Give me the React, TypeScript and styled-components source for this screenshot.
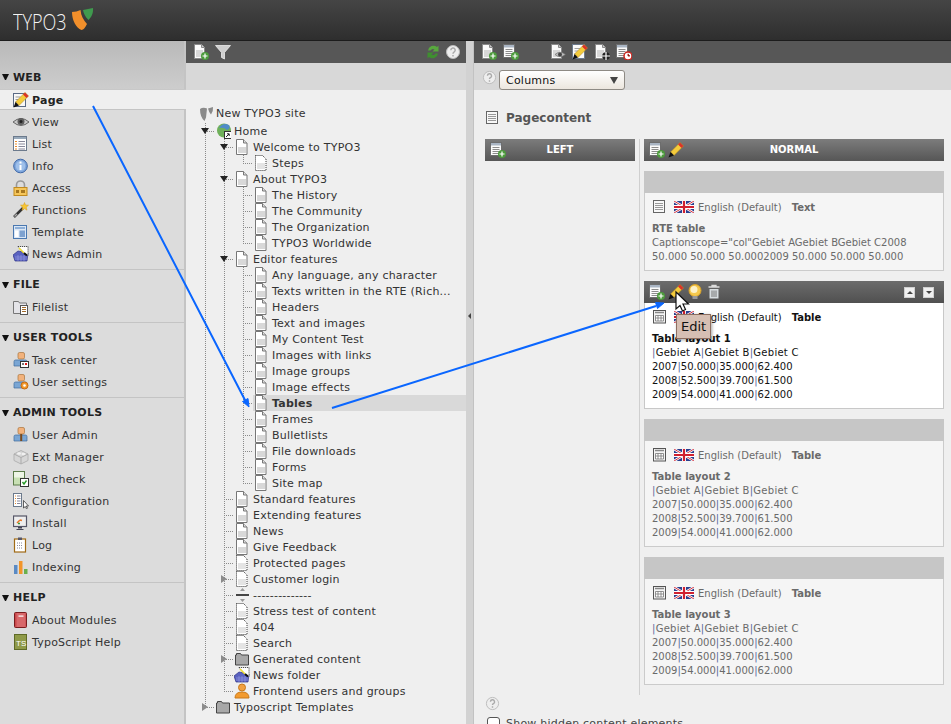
import React from "react";
import styled, { createGlobalStyle } from "styled-components";

const GlobalStyle = createGlobalStyle`
  html, body { margin: 0; padding: 0; height: 100%; overflow: hidden; }
  body { font-family: "DejaVu Sans", Verdana, sans-serif; font-size: 11px; letter-spacing: 0.22px; color: #333; background: #efefef; }
  * { box-sizing: border-box; }
`;

const plus = (
  <>
    <circle cx="12" cy="12" r="4" fill="#4c9a3c" />
    <path d="M12 9.500v5M9.500 12h5" stroke="#fff" strokeWidth="1.200" />
  </>
);
const docBase = (
  <>
    <path d="M1.500 .5h7l3 3v11h-10z" fill="#fbfbfb" stroke="#8a8a8a" />
    <path d="M8.500 .5v3h3" fill="#ccc" stroke="#8a8a8a" />
    <rect x="3" y="6" width="7" height="7" fill="#d8d8d8" />
  </>
);
const tableBase = (
  <>
    <rect x=".5" y=".5" width="11" height="13" fill="#fbfbfb" stroke="#6d6d6d" />
    <rect x="1" y="1" width="10" height="2.500" fill="#a9b5c4" />
    <path d="M2.500 5.500h7M2.500 7.500h7M2.500 9.500h7M2.500 11.500h7" stroke="#8c8c8c" />
  </>
);
const pencil = (
  <>
    <path d="M12 .5L15.500 4 6 13.500 2.500 10z" fill="#f4cb3c" stroke="#a9821e" strokeWidth=".5" />
    <path d="M12 .5L15.500 4l-2 2L10 2.500z" fill="#d8342a" />
    <path d="M2.500 10L6 13.500l-5.500 2z" fill="#111" />
  </>
);
const head = (c = "#f2b27c") => (
  <rect x="5" y=".5" width="6.500" height="6.500" rx="1.500" fill={c} stroke="#a9743c" strokeWidth=".7" />
);
const blueBody = <path d="M1 14V9.500q0-1.500 1.500-1.500h10q1.500 0 1.500 1.500V14z" fill="#7aa6d4" stroke="#3f6b9c" strokeWidth=".7" />;
const doc = <path d="M2.500 .5h7l3.500 3.500v11.500h-10.500z" fill="#fff" stroke="#777" />;
const pageInner = (
  <>
    <path d="M9.500 .5v3.500h3.500" fill="#ddd" stroke="#777" />
    <rect x="4" y="8" width="8" height="6" fill="#d8d8d8" />
  </>
);

const icons: Record<string, React.ReactNode> = {
  pageNew: <>{docBase}{plus}</>,
  tableNew: <>{tableBase}{plus}</>,
  filter: <path d="M.5 1.500h15l-6 7v6.500l-3-1.500v-5z" fill="#cfcfcf" stroke="#eee" strokeWidth=".8" />,
  refresh: (
    <>
      <path d="M3 6.500a5.500 5.500 0 0 1 9-3.500l1.500-1.500v6h-6l2-2a3 3 0 0 0-4 1z" fill="#58a83e" />
      <path d="M13 9.500a5.500 5.500 0 0 1-9 3.500l-1.500 1.500v-6h6l-2 2a3 3 0 0 0 4-1z" fill="#3f8f30" />
    </>
  ),
  help: (
    <>
      <circle cx="8" cy="8" r="6.500" fill="#eee" stroke="#bbb" />
      <path d="M5.800 6.200a2.200 2.200 0 1 1 3.200 2c-.7.4-1 .7-1 1.500M8 11v1.500" fill="none" stroke="#aaa" strokeWidth="1.500" />
    </>
  ),
  docEye: (
    <>
      {docBase}
      <path d="M5 10.500q5-4.500 10.500 0q-5.500 4.500-10.500 0z" fill="#bbb" stroke="#666" strokeWidth=".6" />
      <circle cx="10" cy="10.500" r="2" fill="#444" />
    </>
  ),
  docEdit: (
    <>
      <rect x=".5" y=".5" width="12" height="14" fill="#fbfbfb" stroke="#6c7a8c" />
      <path d="M2.500 4.500h6M2.500 7h4M2.500 9.500h2" stroke="#a0a0a0" />
      {pencil}
    </>
  ),
  docMove: (
    <>
      {docBase}
      <circle cx="12" cy="12" r="3.800" fill="#222" />
      <path d="M12 8v8M8 12h8" stroke="#fff" strokeWidth="1.200" />
    </>
  ),
  tableClock: (
    <>
      {tableBase}
      <circle cx="12" cy="12" r="4" fill="#fff" stroke="#c8231c" strokeWidth="1.500" />
      <path d="M12 9.800V12h2" stroke="#c8231c" />
    </>
  ),
  text: (
    <>
      <rect x="1.500" y="1.500" width="11" height="12" fill="#f8f8f8" stroke="#666" />
      <path d="M3 4.500h8M3 6.500h8M3 8.500h8M3 10.500h8" stroke="#999" />
    </>
  ),
  table: (
    <>
      <rect x="1.500" y="1.500" width="12" height="12.500" fill="#f4f4f4" stroke="#555" />
      <path d="M3 3.500h9" stroke="#888" strokeWidth="1.500" />
      <path d="M3.500 6.500h8v5.500h-8zM3.500 9h8M6 6.500v5.500M9 6.500v5.500" fill="#fff" stroke="#777" strokeWidth=".8" />
    </>
  ),
  pencil,
  bulb: (
    <>
      <circle cx="8" cy="6.500" r="6" fill="#f5c94d" stroke="#d9a228" />
      <circle cx="7" cy="5.500" r="3.500" fill="#fdf2c8" />
      <rect x="5.500" y="12" width="5" height="3" fill="#999" />
    </>
  ),
  trash: (
    <>
      <path d="M2.500 3h11M6 3V1.500h4V3" fill="none" stroke="#ddd" strokeWidth="1.300" />
      <path d="M3.500 5h9v9.500h-9z" fill="#d7dde0" />
      <path d="M6 6.500v6.500M8 6.500v6.500M10 6.500v6.500" stroke="#777" />
    </>
  ),
  pageEdit: (
    <>
      <rect x=".5" y="1.500" width="12" height="13" fill="#f8f8f8" stroke="#5a6a84" />
      <path d="M2.500 5h5M2.500 7.500h3.500M2.500 10h2" stroke="#999" />
      {pencil}
    </>
  ),
  view: (
    <>
      <path d="M0 8q8-7 16 0q-8 7-16 0z" fill="#c8c8c8" stroke="#666" />
      <circle cx="8" cy="7.500" r="3.500" fill="#5e5e5e" />
      <circle cx="8" cy="7.500" r="1.500" fill="#222" />
    </>
  ),
  list: (
    <>
      <rect x=".5" y=".5" width="13" height="14" fill="#fff" stroke="#6c7a8c" />
      <rect x="1" y="1" width="12" height="2" fill="#9ab" />
      <path d="M2 5.500h2M2 8h2M2 10.500h2M2 13h2" stroke="#e88a2a" />
      <path d="M5.500 5.500h6.500M5.500 8h6.500M5.500 10.500h6.500M5.500 13h6.500" stroke="#889" />
    </>
  ),
  info: (
    <>
      <circle cx="7.500" cy="8" r="6.800" fill="#7ea6dc" stroke="#3e68a8" />
      <circle cx="7.500" cy="8" r="4.800" fill="#9fc0ea" />
      <path d="M7.500 3.500v2M7.500 7v5" stroke="#fff" strokeWidth="2" />
    </>
  ),
  access: (
    <>
      <path d="M3.500 8V5a4 4 0 0 1 8 0v3" fill="none" stroke="#999" strokeWidth="1.600" />
      <rect x="1" y="7.500" width="13" height="8" fill="#f6c65a" stroke="#c08a20" />
      <rect x="3" y="10" width="3" height="3" fill="#a87820" />
      <rect x="8" y="10" width="4" height="3" fill="#a87820" />
    </>
  ),
  func: (
    <>
      <path d="M1 15L10 6" stroke="#333" strokeWidth="2.500" />
      <path d="M1.500 14.500L4 12" stroke="#aaa" strokeWidth="1.500" />
      <path d="M11.500 .5l1 2.500 3 .2-2.300 2 .8 3-2.500-1.600L9 8.200l.7-3-2.200-2 3-.2z" fill="#f7c634" stroke="#d69a18" strokeWidth=".5" />
    </>
  ),
  template: (
    <>
      <rect x=".5" y="1.500" width="13" height="13" fill="#dbe7f5" stroke="#4a78b0" />
      <rect x="2" y="3" width="10" height="2" fill="#8fb0d8" />
      <rect x="2" y="6.500" width="3.500" height="6.500" fill="#fff" />
      <rect x="6.500" y="6.500" width="5.500" height="6.500" fill="#7ea2d0" />
    </>
  ),
  news: (
    <>
      <path d="M0 9l5-4 10 2-1 8H2z" fill="#5a62c0" stroke="#2e3388" strokeWidth=".7" />
      <path d="M2 11h12M2 13h12M5 9v6M8 9v6M11 9v6" stroke="#9ba2e6" strokeWidth=".6" />
      <path d="M5 .5h10v9l-4-2z" fill="#fff" stroke="#222" strokeWidth=".8" strokeDasharray="1.200 .8" />
      <path d="M6 2l5 5" stroke="#eedd33" strokeWidth="1.600" />
      <path d="M11 7l3 2.500" stroke="#111" strokeWidth="2" />
    </>
  ),
  file: (
    <>
      <path d="M.5 14.500V2.500h5l1 1.500h7v10.500z" fill="#e4e4e8" stroke="#777" />
      <rect x="7.500" y="6.500" width="7" height="9" fill="#fff" stroke="#555" />
      <path d="M9 8.500h4M9 10.500h4M9 12.500h4" stroke="#a36a2a" />
    </>
  ),
  task: (
    <>
      {head()}
      {blueBody}
      <rect x="7.500" y="9.500" width="8" height="6" fill="#fff" stroke="#333" />
      <rect x="12" y="11" width="2" height="2" fill="#e01818" />
      <rect x="9" y="11" width="2" height="2" fill="#777" />
    </>
  ),
  userSettings: (
    <>
      {head()}
      {blueBody}
      <circle cx="11.500" cy="11.500" r="3.500" fill="#f29a2e" stroke="#c86a10" />
      <circle cx="11.500" cy="11.500" r="1.300" fill="#fff" />
    </>
  ),
  userAdmin: (
    <>
      {head()}
      {blueBody}
      <path d="M7.200 7h2v7h-2z" fill="#7a4a1c" />
    </>
  ),
  ext: (
    <>
      <path d="M1 5l7-3.500L15 5v6.500L8 15l-7-3.500z" fill="#d6d6d6" stroke="#b4b4b4" />
      <path d="M1 5l7 3.500L15 5M8 8.500V15" fill="none" stroke="#aaa" />
      <ellipse cx="6" cy="4.500" rx="2" ry="1.200" fill="#f0f0f0" />
      <ellipse cx="10.500" cy="5" rx="2" ry="1.200" fill="#f0f0f0" />
    </>
  ),
  db: (
    <>
      <rect x=".5" y=".5" width="11" height="13.500" fill="#c8e0b4" stroke="#5c7c4a" />
      <rect x="1" y="1" width="10" height="5.500" fill="#eef5e6" />
      <rect x="7.500" y="7.500" width="8" height="8" fill="#fff" stroke="#333" />
      <path d="M9.500 11l1.500 2 2.500-3.500" fill="none" stroke="#2a9a2a" strokeWidth="1.400" />
    </>
  ),
  config: (
    <>
      <rect x=".5" y=".5" width="8" height="13" fill="#fff" stroke="#6c7a8c" />
      <path d="M2 3h1M2 5.500h1M2 8h1M2 10.500h1" stroke="#e88a2a" />
      <path d="M4 3h3.500M4 5.500h3.500M4 8h3.500M4 10.500h3.500" stroke="#889" />
      <path d="M10.500 7.500v7.500l1.800-1.500 1.200 2.300 1-.6-1.200-2.200h2.200z" fill="#fff" stroke="#222" strokeWidth=".7" />
    </>
  ),
  install: (
    <>
      <rect x=".5" y="1" width="13" height="10.500" fill="#eee" stroke="#556" strokeWidth="1.200" />
      <path d="M4 8l3-3M7 5l2 .5" stroke="#e8782a" strokeWidth="1.500" />
      <path d="M5 8.500h2" stroke="#3a9a3a" strokeWidth="1.500" />
      <path d="M5 12h4v1.500H5zM3.500 14h7v1h-7z" fill="#445" />
    </>
  ),
  log: (
    <>
      <rect x="1.500" y="2" width="11" height="13" fill="#fff" stroke="#a06a14" strokeWidth="1.200" />
      <rect x="5" y=".5" width="4" height="2.500" fill="#556" />
      <path d="M4 6h6M4 8.500h6M4 11h6" stroke="#889" strokeDasharray="1 1" />
    </>
  ),
  index: (
    <>
      <rect x="1" y="6" width="3.500" height="9" fill="#5a8ac4" />
      <rect x="6" y="2" width="3.500" height="13" fill="#f2952a" />
      <rect x="11" y="10" width="3.500" height="5" fill="#6ab04e" />
    </>
  ),
  about: (
    <>
      <rect x="1.500" y=".5" width="12" height="15" rx="1" fill="#c9474a" stroke="#7a1c1e" />
      <rect x="3.500" y="1" width="9" height="14" fill="#d8686a" />
      <rect x="5.500" y="3.500" width="5" height="1.200" fill="#fff" />
    </>
  ),
  ts: (
    <>
      <rect x="1.500" y=".5" width="12" height="15" fill="#8f9a48" stroke="#5e6a26" />
      <text x="3" y="12" fontSize="8" letterSpacing="0" fontFamily="Liberation Sans" fill="#fff">TS</text>
    </>
  ),
  site: <path d="M1 3q3-2 7-.5l-1 9-1.500 3.500Q1 11 1 3zM9 2.500l5-1.500q.5 4-2 7.500-2-2-3-6z" fill="#8a8a8a" />,
  home: (
    <>
      <circle cx="9" cy="7.500" r="7" fill="#6fb05a" />
      <path d="M4 5q4-6 10-3 2 3-2 5-3-3-8-2z" fill="#4f8cc8" />
      <rect x="9.500" y="8.500" width="7" height="7" fill="#fff" stroke="#333" />
      <path d="M11 14l3-3M12 10.800h2.200V13" fill="none" stroke="#222" />
    </>
  ),
  page: <>{doc}{pageInner}</>,
  hidden: (
    <>
      <path d="M2.500 .5h7l3.500 3.500v11.500h-10.500z" fill="#fff" stroke="#333" strokeDasharray="1 1" />
      <rect x="4" y="8" width="8" height="6" fill="#e4e4e4" />
    </>
  ),
  sep: (
    <>
      <path d="M6 4l2.500-3L11 4zM6 12l2.500 3L11 12z" fill="#999" />
      <rect x="2" y="7" width="13" height="2" fill="#444" />
    </>
  ),
  folder: <path d="M1.500 14V4h1V2.500h4l1 1.500h7v10z" fill="#a8a8a8" stroke="#444" />,
  feuser: (
    <>
      <circle cx="8" cy="4.500" r="3.500" fill="#f0a040" stroke="#c87818" />
      <path d="M1 15q0-6 7-6t7 6z" fill="#f29a2e" stroke="#c87818" />
    </>
  ),
};

function Icon({ name, size = 16 }: { name: string; size?: number }) {
  return (
    <IconSvg viewBox="0 0 16 16" width={size} height={size}>
      {icons[name]}
    </IconSvg>
  );
}

function Flag() {
  return (
    <IconSvg viewBox="0 0 20 12" width={20} height={12}>
      <rect width="20" height="12" fill="#2a3f8f" />
      <path d="M0 0l20 12M20 0L0 12" stroke="#fff" strokeWidth="2.400" />
      <path d="M0 0l20 12M20 0L0 12" stroke="#d02030" strokeWidth=".9" />
      <path d="M10 0v12M0 6h20" stroke="#fff" strokeWidth="4" />
      <path d="M10 0v12M0 6h20" stroke="#d02030" strokeWidth="2.200" />
    </IconSvg>
  );
}

const menu = [
  {
    title: "WEB",
    items: [
      ["pageEdit", "Page"],
      ["view", "View"],
      ["list", "List"],
      ["info", "Info"],
      ["access", "Access"],
      ["func", "Functions"],
      ["template", "Template"],
      ["news", "News Admin"],
    ],
  },
  { title: "FILE", items: [["file", "Filelist"]] },
  {
    title: "USER TOOLS",
    items: [
      ["task", "Task center"],
      ["userSettings", "User settings"],
    ],
  },
  {
    title: "ADMIN TOOLS",
    items: [
      ["userAdmin", "User Admin"],
      ["ext", "Ext Manager"],
      ["db", "DB check"],
      ["config", "Configuration"],
      ["install", "Install"],
      ["log", "Log"],
      ["index", "Indexing"],
    ],
  },
  {
    title: "HELP",
    items: [
      ["about", "About Modules"],
      ["ts", "TypoScript Help"],
    ],
  },
];

const tree: [string, string, string][] = [
  ["o", "Home", "home"],
  ["|o", "Welcome to TYPO3", "page"],
  ["||L", "Steps", "hidden"],
  ["|o", "About TYPO3", "page"],
  ["||T", "The History", "page"],
  ["||T", "The Community", "page"],
  ["||T", "The Organization", "page"],
  ["||L", "TYPO3 Worldwide", "page"],
  ["|o", "Editor features", "page"],
  ["||T", "Any language, any character", "page"],
  ["||T", "Texts written in the RTE (Rich...", "page"],
  ["||T", "Headers", "page"],
  ["||T", "Text and images", "page"],
  ["||T", "My Content Test", "page"],
  ["||T", "Images with links", "page"],
  ["||T", "Image groups", "page"],
  ["||T", "Image effects", "page"],
  ["||T", "Tables", "page"],
  ["||T", "Frames", "page"],
  ["||T", "Bulletlists", "page"],
  ["||T", "File downloads", "page"],
  ["||T", "Forms", "page"],
  ["||L", "Site map", "page"],
  ["|T", "Standard features", "page"],
  ["|T", "Extending features", "page"],
  ["|T", "News", "page"],
  ["|T", "Give Feedback", "page"],
  ["|T", "Protected pages", "hidden"],
  ["|c", "Customer login", "hidden"],
  ["|T", "--------------", "sep"],
  ["|T", "Stress test of content", "hidden"],
  ["|T", "404", "hidden"],
  ["|T", "Search", "hidden"],
  ["|c", "Generated content", "folder"],
  ["|T", "News folder", "news"],
  ["|L", "Frontend users and groups", "feuser"],
  ["C", "Typoscript Templates", "folder"],
];

const tableLines = ["|Gebiet A|Gebiet B|Gebiet C", "2007|50.000|35.000|62.400", "2008|52.500|39.700|61.500", "2009|54.000|41.000|62.000"];

function Meta({ icon, kind }: { icon: string; kind: string }) {
  return (
    <MetaRow>
      <Icon name={icon} />
      <Flag />
      <span>English (Default)</span>
      <strong>{kind}</strong>
    </MetaRow>
  );
}

function TableLine({ text }: { text: string }) {
  return (
    <TableRow $wide={text.startsWith("|")}>
      {text.split("|").map((part, i) => (
        <React.Fragment key={i}>
          {i > 0 && <Pipe>|</Pipe>}
          {part}
        </React.Fragment>
      ))}
    </TableRow>
  );
}

export default function App() {
  return (
    <Page>
      <GlobalStyle />
      <TopBar>
        <LogoText>TYPO3</LogoText>
        <svg viewBox="0 0 24 24" width={24} height={24}>
          <path d="M2 5c3 0 6-1 8.500-2 .5 6 3 10 6.500 14-1.500 3-3.500 6-5.500 6C6 21 2 13 2 5z" fill="#f18f2b" />
          <path d="M13 3l10-2c.5 5-1.500 9-4.500 12-3-3-5-6.500-5.500-10z" fill="#3f9a4e" />
        </svg>
      </TopBar>
      <Main>
        <Sidebar>
          {menu.map((group, g) => (
            <Group key={group.title}>
              <GroupHead $first={g === 0}>
                <DownArrow />
                {group.title}
              </GroupHead>
              {group.items.map(([icon, label]) =>
                label === "Page" ? (
                  <ActiveItem key={label}>
                    <Icon name={icon} />
                    {label}
                  </ActiveItem>
                ) : (
                  <MenuItem key={label}>
                    <Icon name={icon} />
                    {label}
                  </MenuItem>
                ),
              )}
            </Group>
          ))}
        </Sidebar>

        <TreePanel>
          <TreeToolbar>
            <ToolIcon><Icon name="pageNew" /></ToolIcon>
            <ToolIcon><Icon name="filter" /></ToolIcon>
            <Grow />
            <ToolIcon><Icon name="refresh" /></ToolIcon>
            <ToolIcon><Icon name="help" /></ToolIcon>
          </TreeToolbar>
          <SubBar />
          <TreeBody>
            <TreeRoot>
              <Icon name="site" />
              New TYPO3 site
            </TreeRoot>
            {tree.map(([guides, label, icon]) => (
              <TreeRow key={label}>
                {guides.split("").map((g, i) => (
                  <Guide key={i} $kind={g}>
                    {(g === "o" || g === "c" || g === "C") && <Toggle $open={g === "o"} />}
                  </Guide>
                ))}
                <TreeLabel $selected={label === "Tables"}>
                  <IconCell><Icon name={icon} /></IconCell>
                  {label}
                </TreeLabel>
              </TreeRow>
            ))}
          </TreeBody>
        </TreePanel>

        <Splitter>
          <SplitHandle />
        </Splitter>

        <Content>
          <Toolbar>
            <ToolIcon><Icon name="pageNew" /></ToolIcon>
            <ToolIcon><Icon name="tableNew" /></ToolIcon>
            <ToolGap />
            <ToolIcon><Icon name="docEye" /></ToolIcon>
            <ToolIcon><Icon name="docEdit" /></ToolIcon>
            <ToolIcon><Icon name="docMove" /></ToolIcon>
            <ToolIcon><Icon name="tableClock" /></ToolIcon>
          </Toolbar>
          <ContentSubBar>
            <Icon name="help" size={15} />
            <Select>
              Columns
              <SelectArrow />
            </Select>
          </ContentSubBar>
          <ContentBody>
            <Heading>
              <Icon name="text" />
              Pagecontent
            </Heading>
            <Columns>
              <Column>
                <ColumnHead>
                  <HeadIcons><Icon name="tableNew" /></HeadIcons>
                  LEFT
                </ColumnHead>
              </Column>
              <MainColumn>
                <ColumnHead>
                  <HeadIcons>
                    <Icon name="tableNew" />
                    <Icon name="pencil" />
                  </HeadIcons>
                  NORMAL
                </ColumnHead>
                <Card>
                  <CardHead />
                  <CardBody>
                    <Meta icon="text" kind="Text" />
                    <CardTitle>RTE table</CardTitle>
                    <div>Captionscope="col"Gebiet AGebiet BGebiet C2008</div>
                    <div>50.000 50.000 50.0002009 50.000 50.000 50.000</div>
                  </CardBody>
                </Card>
                <Card $active>
                  <ActiveHead>
                    <HeadIcons>
                      <Icon name="tableNew" />
                      <Icon name="pencil" />
                      <Icon name="bulb" />
                      <Icon name="trash" />
                    </HeadIcons>
                    <MoveButtons>
                      <MoveButton><Triangle /></MoveButton>
                      <MoveButton><Triangle $down /></MoveButton>
                    </MoveButtons>
                  </ActiveHead>
                  <CardBody $active>
                    <Meta icon="table" kind="Table" />
                    <CardTitle>Table layout 1</CardTitle>
                    {tableLines.map((l) => <TableLine key={l} text={l} />)}
                  </CardBody>
                  <Tooltip>Edit</Tooltip>
                </Card>
                {[2, 3].map((n) => (
                  <Card key={n}>
                    <CardHead />
                    <CardBody>
                      <Meta icon="table" kind="Table" />
                      <CardTitle>Table layout {n}</CardTitle>
                      {tableLines.map((l) => <TableLine key={l} text={l} />)}
                    </CardBody>
                  </Card>
                ))}
              </MainColumn>
            </Columns>
            <FooterHelp><Icon name="help" size={15} /></FooterHelp>
            <CheckRow>
              <CheckBox />
              Show hidden content elements
            </CheckRow>
          </ContentBody>
        </Content>
      </Main>

      <Overlay viewBox="0 0 951 724" width={951} height={724}>
        <path d="M93 106L246 402M332 408L656 306" fill="none" stroke="#0a66ff" strokeWidth="2" />
        <path d="M249 407l-6.500-5.500 5.500-3zM664 303l-8.500-.5 2 6z" fill="#0a66ff" stroke="#0a66ff" />
        <path d="M676 292v17l4-3.500 2.500 5.500 3-1.500-2.500-5.500h5.500z" fill="#fff" stroke="#111" strokeWidth="1.200" />
      </Overlay>
    </Page>
  );
}

const Page = styled.div`
  display: flex;
  flex-direction: column;
  width: 100vw;
  height: 100vh;
  overflow: hidden;
  position: relative;
`;

const IconSvg = styled.svg`
  display: block;
  flex: none;
`;

const TopBar = styled.header`
  display: flex;
  align-items: flex-start;
  flex: none;
  height: 41px;
  padding: 7px 0 0 13px;
  background: linear-gradient(#454545, #2e2e2e);
  border-bottom: 1px solid #1c1c1c;
`;

const LogoText = styled.div`
  width: 57px;
  font-family: "Open Sans", sans-serif;
  font-weight: 300;
  font-size: 22px;
  line-height: 28px;
  letter-spacing: 0;
  color: #f4f4f4;
  transform: scaleX(0.82);
  transform-origin: left center;
`;

const Main = styled.div`
  display: grid;
  grid-template-columns: 186px 280px 8px 477px;
  flex: 1;
  min-height: 0;
`;

const Sidebar = styled.nav`
  background: #dcdcdc;
  border-right: 2px solid #c4c4c4;
  min-width: 0;
`;

const Group = styled.section`
  padding-bottom: 4px;
  border-bottom: 1px solid #c4c4c4;
  &:last-child { border-bottom: 0; }
`;

const GroupHead = styled.h2<{ $first?: boolean }>`
  display: flex;
  align-items: center;
  gap: 4px;
  margin: 0;
  height: ${(p) => (p.$first ? "48px" : "26px")};
  padding: ${(p) => (p.$first ? "24px 0 0 2px" : "3px 0 0 2px")};
  font-size: 11px;
  font-weight: bold;
  color: #222;
  background: ${(p) => (p.$first ? "linear-gradient(#b9b9b9, #cdcdcd)" : "transparent")};
`;

const DownArrow = styled.i`
  flex: none;
  width: 7px;
  height: 6px;
  border-left: 3.5px solid transparent;
  border-right: 3.5px solid transparent;
  border-top: 6px solid #111;
`;

const MenuItem = styled.div`
  display: flex;
  align-items: center;
  gap: 3px;
  height: 22px;
  padding-left: 13px;
  color: #333;
`;

const ActiveItem = styled(MenuItem)`
  height: 21px;
  margin: 0 -2px 1px 0;
  padding-top: 1px;
  font-weight: bold;
  color: #222;
  background: #efefef;
  border-top: 1px solid #c8c8c8;
  border-bottom: 1px solid #c4c4c4;
  position: relative;
`;

const Toolbar = styled.div`
  display: flex;
  align-items: center;
  height: 22px;
  padding: 0 7px;
  background: #575757;
`;

const TreeToolbar = styled(Toolbar)`
  padding-right: 5px;
`;

const ToolIcon = styled.span`
  display: flex;
  width: 22px;
  ${TreeToolbar} &:nth-last-child(2) { width: 20px; }
  ${TreeToolbar} &:last-child { width: 16px; }
`;

const ToolGap = styled.span`
  width: 25px;
`;

const Grow = styled.span`
  flex: 1;
`;

const TreePanel = styled.div`
  min-width: 0;
  background: #efefef;
`;

const SubBar = styled.div`
  height: 27px;
  background: #d8d8d8;
`;

const TreeBody = styled.div`
  padding: 14px 0 0 10px;
`;

const TreeRoot = styled.div`
  display: flex;
  align-items: center;
  height: 19px;
  gap: 1px;
  padding-left: 3px;
`;

const TreeRow = styled.div`
  display: flex;
  height: 16px;
`;

const dot = "repeating-linear-gradient(to bottom, #8a8a8a 0 1px, transparent 1px 2px)";
const dotH = "repeating-linear-gradient(to right, #8a8a8a 0 1px, transparent 1px 2px)";

const guideBackgrounds: Record<string, string> = {
  "|": `${dot} 9px 0 / 1px 100% no-repeat`,
  T: `${dot} 9px 0 / 1px 100% no-repeat, ${dotH} 9px 8px / 10px 1px no-repeat`,
  L: `${dot} 9px 0 / 1px 9px no-repeat, ${dotH} 9px 8px / 10px 1px no-repeat`,
  o: `${dot} 9px 0 / 1px 100% no-repeat, ${dotH} 9px 8px / 10px 1px no-repeat`,
  c: `${dot} 9px 0 / 1px 100% no-repeat, ${dotH} 9px 8px / 10px 1px no-repeat`,
  C: `${dot} 9px 0 / 1px 9px no-repeat, ${dotH} 9px 8px / 10px 1px no-repeat`,
};

const Guide = styled.span<{ $kind: string }>`
  display: flex;
  align-items: center;
  justify-content: center;
  flex: none;
  width: 19px;
  padding-right: 1px;
  background: ${(p) => guideBackgrounds[p.$kind]};
`;

const Toggle = styled.i<{ $open: boolean }>`
  width: 0;
  height: 0;
  ${(p) =>
    p.$open
      ? `border-left: 4px solid transparent; border-right: 4px solid transparent; border-top: 6px solid #222;`
      : `border-top: 4.5px solid transparent; border-bottom: 4.5px solid transparent; border-left: 6px solid #8c8c8c;`}
`;

const TreeLabel = styled.span<{ $selected?: boolean }>`
  display: flex;
  align-items: center;
  flex: 1;
  min-width: 0;
  white-space: nowrap;
  font-weight: ${(p) => (p.$selected ? "bold" : "normal")};
  background: ${(p) => (p.$selected ? "#d9d9d9" : "transparent")};
`;

const IconCell = styled.span`
  flex: none;
  width: 19px;
`;

const Splitter = styled.div`
  display: flex;
  align-items: flex-start;
  justify-content: flex-start;
  padding: 272px 0 0 2px;
  background: #d2d2d2;
  border-right: 1px solid #c2c2c2;
`;

const SplitHandle = styled.i`
  width: 0;
  height: 0;
  border-top: 3px solid transparent;
  border-bottom: 3px solid transparent;
  border-right: 3px solid #444;
`;

const Content = styled.main`
  min-width: 0;
  background: #efefef;
`;

const ContentSubBar = styled(SubBar)`
  display: flex;
  align-items: flex-start;
  gap: 2px;
  padding: 7px 0 0 8px;
`;

const Select = styled.div`
  display: flex;
  align-items: center;
  justify-content: space-between;
  width: 126px;
  height: 20px;
  padding: 0 6px;
  font-size: 11px;
  color: #111;
  background: linear-gradient(#fff, #ece6de);
  border: 1px solid #8e8a84;
  border-radius: 3px;
`;

const SelectArrow = styled.i`
  border-left: 4px solid transparent;
  border-right: 4px solid transparent;
  border-top: 7px solid #444;
`;

const ContentBody = styled.div`
  padding: 20px 7px 0 11px;
`;

const Heading = styled.h1`
  display: flex;
  align-items: center;
  gap: 5px;
  height: 16px;
  margin: 0 0 13px;
  font-size: 12px;
  letter-spacing: 0;
  font-weight: bold;
  color: #555;
`;

const Columns = styled.div`
  display: grid;
  grid-template-columns: 150px 305px;
  gap: 4px;
`;

const Column = styled.div`
  min-width: 0;
`;

const MainColumn = styled.div`
  padding: 0 0 10px 4px;
  border-left: 1px solid #cfcfcf;
`;

const ColumnHead = styled.div`
  display: flex;
  align-items: center;
  justify-content: center;
  height: 22px;
  padding-bottom: 2px;
  position: relative;
  font-size: 10px;
  font-weight: bold;
  letter-spacing: 0;
  color: #fff;
  background: linear-gradient(#7c7c7c, #565656);
`;

const HeadIcons = styled.div`
  display: flex;
  gap: 3px;
  position: absolute;
  left: 5px;
  top: 3px;
`;

const Card = styled.article<{ $active?: boolean }>`
  position: relative;
  margin-top: 10px;
  border: 1px solid ${(p) => (p.$active ? "#c8c8c8" : "#cbcbcb")};
  border-top: 0;
`;

const CardHead = styled.div`
  height: 22px;
  margin: 0 -1px;
  background: #c6c6c6;
`;

const ActiveHead = styled.div`
  display: flex;
  justify-content: flex-end;
  align-items: center;
  position: relative;
  height: 22px;
  margin: 0 -1px;
  padding-right: 10px;
  background: linear-gradient(#6c6c6c, #505050);
`;

const MoveButtons = styled.div`
  display: flex;
  gap: 8px;
`;

const MoveButton = styled.span`
  display: flex;
  align-items: center;
  justify-content: center;
  width: 11px;
  height: 11px;
  background: #f0f0f0;
  border: 1px solid #d0d0d0;
`;

const Triangle = styled.i<{ $down?: boolean }>`
  border-left: 3px solid transparent;
  border-right: 3px solid transparent;
  ${(p) => (p.$down ? "border-top: 3px solid #444;" : "border-bottom: 3px solid #444;")}
`;

const CardBody = styled.div<{ $active?: boolean }>`
  padding: 8px 7px 6px;
  font-size: 10px;
  letter-spacing: 0;
  line-height: 14px;
  color: ${(p) => (p.$active ? "#111" : "#6a6a6a")};
  background: ${(p) => (p.$active ? "#fff" : "#f5f5f5")};
`;

const TableRow = styled.div<{ $wide?: boolean }>`
  letter-spacing: ${(p) => (p.$wide ? "0.26px" : "0")};
`;

const Pipe = styled.span`
  color: #56689c;
`;

const MetaRow = styled.div`
  display: flex;
  align-items: center;
  height: 14px;
  margin-bottom: 7px;
  svg { margin-bottom: 2px; }
  svg:nth-child(2) { margin: 0 4px 2px 6px; }
  strong { margin-left: 10px; }
`;

const CardTitle = styled.div`
  font-weight: bold;
`;

const Tooltip = styled.div`
  position: absolute;
  left: 31px;
  top: 33px;
  padding: 3px 4px;
  font-size: 13px;
  letter-spacing: 0;
  line-height: 17px;
  color: #111;
  background: #d6bfb3;
  border: 1px solid #8d6e60;
  box-shadow: 1px 1px 3px rgba(0, 0, 0, 0.35);
`;

const FooterHelp = styled.div`
  margin-top: 1px;
`;

const CheckRow = styled.label`
  display: flex;
  align-items: center;
  gap: 6px;
  margin-top: 5px;
  padding-left: 2px;
  height: 14px;
  color: #444;
`;

const CheckBox = styled.span`
  width: 13px;
  height: 13px;
  background: #fff;
  border: 1px solid #555;
  border-radius: 3px;
`;

const Overlay = styled.svg`
  position: absolute;
  left: 0;
  top: 0;
  pointer-events: none;
`;
